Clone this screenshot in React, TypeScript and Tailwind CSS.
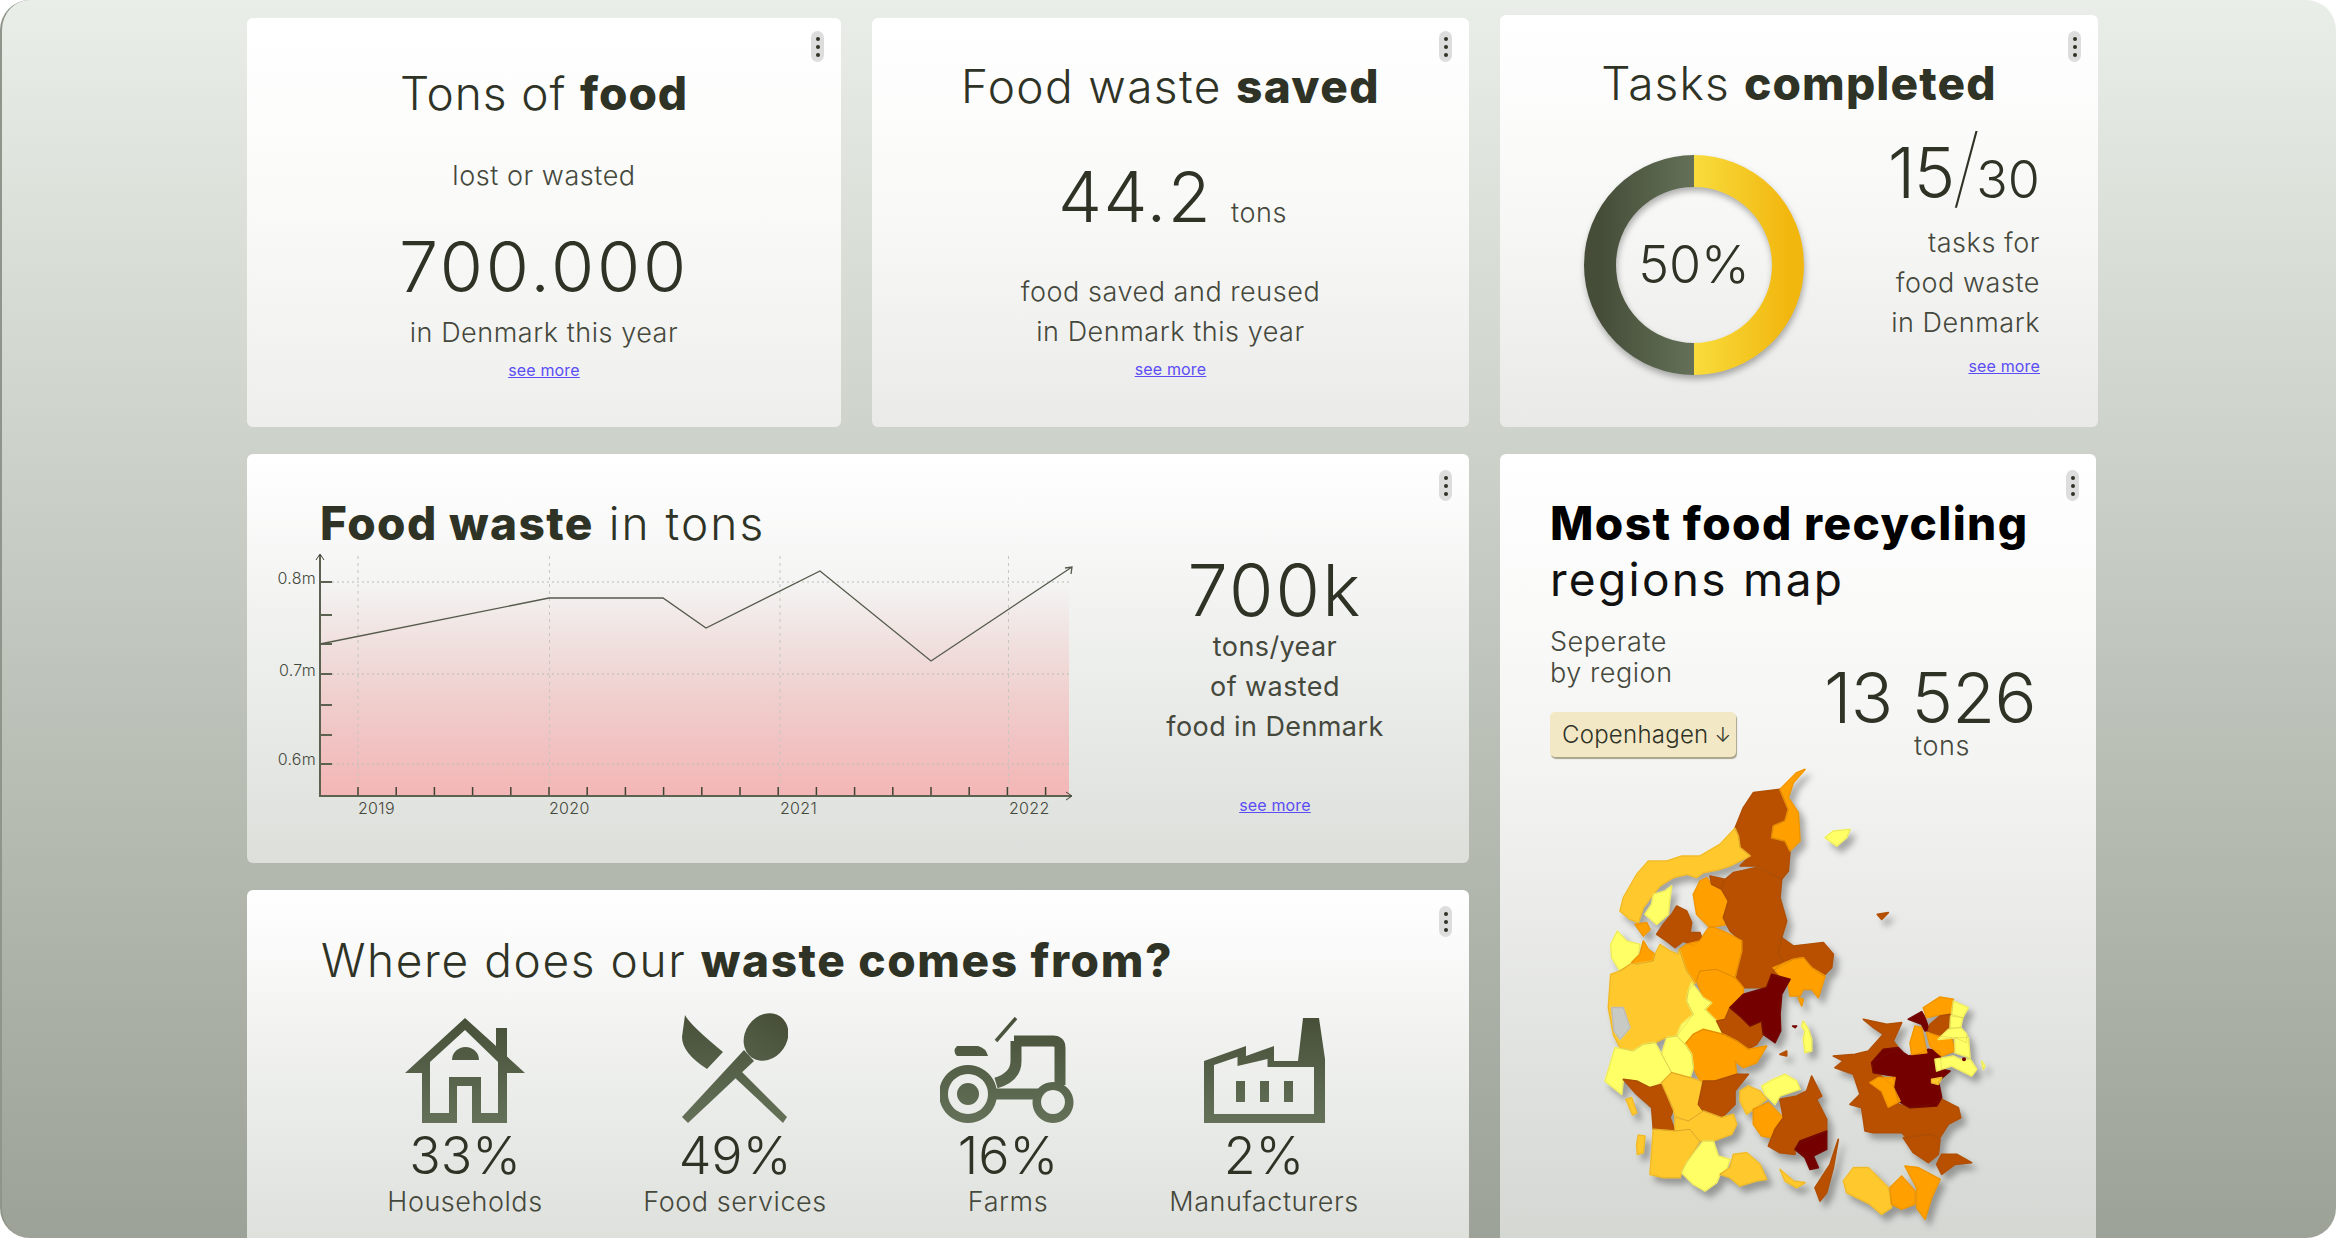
const font = "font-['Inter','Liberation_Sans',sans-serif]"

const regions: { fill: string; pts: string }[] = [
  // Jutland north
  { fill: '#b85000', pts: '640,155 720,145 745,205 735,240 700,255 695,290 735,300 750,330 745,390 725,415 690,395 650,375 600,375 630,345 600,320 595,285 585,262 610,200' },
  { fill: '#ffa000', pts: '795,85 770,95 720,145 745,205 735,240 700,255 695,290 735,300 750,330 780,300 775,215 745,170 760,125' },
  { fill: '#ffc92e', pts: '585,262 595,285 600,320 630,345 600,360 570,375 540,385 490,395 470,410 440,400 400,410 360,435 340,460 310,500 295,545 270,535 240,510 250,470 290,400 325,360 380,360 425,345 480,345 540,310' },
  { fill: '#ffff66', pts: '395,435 390,470 385,520 350,550 315,520 335,490 340,460 375,450' },
  { fill: '#ffff66', pts: '232,570 260,600 300,610 295,640 270,670 240,690 215,650 212,610' },
  { fill: '#ffa000', pts: '285,550 320,545 330,565 310,585' },
  { fill: '#ffa000', pts: '310,600 325,625 345,640 340,660 290,670 275,665 300,640' },
  { fill: '#b85000', pts: '410,495 440,510 455,545 450,575 480,575 485,590 460,615 430,600 405,620 380,600 350,580 370,550 395,520' },
  { fill: '#ffa000', pts: '500,410 515,430 545,445 565,480 550,530 560,550 510,560 470,520 460,460 480,420' },
  { fill: '#b85000', pts: '580,395 650,380 725,415 720,470 740,540 725,590 715,635 730,660 700,690 720,705 690,710 680,740 610,740 585,710 605,630 605,600 570,570 560,550 550,530 565,480 545,445 550,420' },
  { fill: '#b85000', pts: '510,405 555,415 545,445 515,430' },
  { fill: '#b85000', pts: '725,590 760,615 850,605 880,640 875,680 850,705 815,680 790,650 760,655 700,690 730,660 715,635' },
  { fill: '#ffa000', pts: '700,680 760,655 790,650 815,680 855,705 835,770 815,745 790,745 780,765 750,765 745,730 720,705' },
  { fill: '#ffa000', pts: '775,770 790,775 785,795' },
  // Jutland middle
  { fill: '#ffa000', pts: '510,555 560,575 605,600 605,630 585,710 530,685 480,690 465,725 440,690 418,625 440,610 480,600 495,575' },
  { fill: '#ffa000', pts: '480,690 530,685 585,710 610,740 610,760 570,800 555,835 530,840 495,805 515,785 490,770 470,720' },
  { fill: '#ffc92e', pts: '360,610 390,630 415,640 418,625 440,690 465,725 445,750 440,780 460,820 410,885 375,890 345,905 310,910 280,930 240,920 220,880 205,800 212,700 240,690 270,670 340,660 345,640' },
  { fill: '#c8cac6', pts: '215,800 250,800 270,860 240,895 222,870' },
  { fill: '#ffff66', pts: '455,725 490,770 515,785 495,805 530,840 550,880 490,865 460,880 435,910 410,885 425,850 460,820 440,780 445,750' },
  { fill: '#b85000', pts: '570,800 600,825 630,855 665,840 670,880 650,910 625,925 590,900 550,880 530,840 555,835' },
  { fill: '#740000', pts: '695,700 750,715 725,760 720,820 722,870 705,905 670,880 665,840 630,855 600,825 570,800 610,760 680,740' },
  { fill: '#ffa000', pts: '490,865 550,880 590,900 625,925 680,915 650,965 610,980 585,960 590,1000 525,1020 480,1020 460,980 455,940 435,910 460,880' },
  { fill: '#ffff66', pts: '380,890 410,885 435,910 455,940 460,980 450,1010 395,995 365,940' },
  { fill: '#ffff66', pts: '225,920 280,930 310,910 345,905 365,940 395,995 365,1025 330,1040 290,1020 250,1015 245,1060 195,1020' },
  // Jutland south
  { fill: '#b85000', pts: '250,1015 290,1020 330,1040 365,1030 385,1070 400,1105 390,1130 405,1170 340,1165 335,1100 290,1060' },
  { fill: '#ffc92e', pts: '258,1075 275,1070 290,1115 278,1122' },
  { fill: '#ffc92e', pts: '365,1025 395,995 450,1010 480,1020 490,1035 475,1090 490,1110 445,1140 405,1125 400,1105 385,1070' },
  { fill: '#b85000', pts: '490,1020 525,1020 590,1000 625,1000 585,1050 585,1090 545,1130 490,1110 475,1090' },
  { fill: '#ffc92e', pts: '405,1130 445,1140 490,1110 545,1130 580,1120 590,1150 575,1180 520,1200 475,1200 450,1165 405,1170' },
  { fill: '#ffc92e', pts: '340,1165 405,1170 450,1165 480,1200 430,1280 420,1310 370,1310 330,1300' },
  { fill: '#ffc92e', pts: '295,1182 315,1185 310,1235 292,1240 290,1210' },
  { fill: '#ffff66', pts: '490,1200 520,1200 535,1245 570,1255 560,1285 540,1300 530,1325 495,1350 460,1330 425,1295 440,1265' },
  { fill: '#ffc92e', pts: '580,1240 620,1235 660,1270 680,1315 650,1320 600,1335 570,1310 540,1300 570,1280' },
  // Funen
  { fill: '#ffff66', pts: '665,1035 700,1015 735,1000 770,1020 780,1045 720,1065 705,1090 675,1060' },
  { fill: '#ffc92e', pts: '600,1050 625,1035 660,1050 680,1075 640,1105 620,1120 600,1080' },
  { fill: '#ffa000', pts: '640,1105 685,1085 730,1130 705,1165 695,1190 665,1185 640,1150' },
  { fill: '#b85000', pts: '720,1075 770,1065 800,1050 815,1005 845,1065 830,1075 860,1135 860,1170 800,1200 765,1215 765,1240 720,1235 685,1215 705,1165 730,1130' },
  { fill: '#740000', pts: '860,1170 860,1225 820,1245 835,1280 810,1285 795,1250 765,1225 780,1200' },
  { fill: '#b85000', pts: '895,1195 880,1280 860,1355 840,1380 825,1340 870,1270' },
  { fill: '#ffc92e', pts: '720,1285 760,1320 795,1325 770,1340 735,1320' },
  // islands
  { fill: '#ffff66', pts: '790,840 805,865 815,895 815,930 795,935 790,895 795,870 785,855' },
  { fill: '#ffff66', pts: '855,290 880,270 930,265 920,290 890,315' },
  { fill: '#b85000', pts: '1012,520 1045,515 1025,535' },
  { fill: '#b85000', pts: '720,940 740,930 740,945' },
  { fill: '#740000', pts: '758,855 770,855 765,860' },
  // Zealand
  { fill: '#b85000', pts: '970,835 1040,850 1085,845 1060,900 1075,920 1005,960 995,985 1030,1010 1065,1040 1075,1090 1110,1100 1175,1090 1205,1075 1255,1100 1262,1130 1225,1150 1200,1190 1170,1180 1100,1190 1085,1175 1000,1175 975,1170 965,1100 930,1090 960,1060 940,1000 885,980 910,960 880,945 945,940 985,930 1030,880 1000,860' },
  { fill: '#740000', pts: '1030,925 1075,920 1090,935 1105,945 1130,940 1165,925 1200,930 1205,985 1230,990 1195,1020 1205,1070 1190,1095 1110,1100 1075,1080 1065,1040 1060,1005 1000,995 995,965' },
  { fill: '#ffa000', pts: '1015,1010 1065,1010 1060,1040 1080,1080 1045,1098 1025,1050 990,1025' },
  { fill: '#ffa000', pts: '1125,855 1145,860 1160,935 1115,940 1110,905' },
  { fill: '#740000', pts: '1105,835 1145,812 1155,830 1168,868 1155,870 1145,850' },
  { fill: '#ffa000', pts: '1150,800 1200,768 1240,775 1235,820 1195,822 1160,830' },
  { fill: '#b85000', pts: '1200,825 1230,820 1230,860 1195,885 1165,870 1170,850' },
  { fill: '#ffff66', pts: '1240,780 1285,800 1268,830 1235,820' },
  { fill: '#ffff66', pts: '1232,825 1268,830 1262,860 1230,860' },
  { fill: '#ffa000', pts: '1160,875 1195,885 1235,890 1245,930 1205,945 1170,915' },
  { fill: '#ffff66', pts: '1225,865 1262,860 1280,880 1280,905 1245,890 1195,895' },
  { fill: '#ffff66', pts: '1245,890 1285,890 1290,950 1245,935' },
  { fill: '#ffff66', pts: '1185,955 1240,945 1260,955 1290,955 1310,985 1295,1005 1265,990 1235,975 1190,990' },
  { fill: '#ffc92e', pts: '1175,1015 1205,1010 1195,1030 1175,1025' },
  { fill: '#ffff66', pts: '1325,960 1335,975 1330,985' },
  { fill: '#b85000', pts: '1090,1190 1170,1180 1200,1195 1195,1240 1165,1265 1120,1235' },
  { fill: '#b85000', pts: '1205,1240 1250,1240 1295,1265 1245,1270 1205,1300 1190,1270' },
  { fill: '#ffc92e', pts: '940,1280 985,1280 1045,1340 1055,1400 1025,1420 990,1390 920,1355 910,1320' },
  { fill: '#ffa000', pts: '1085,1305 1125,1350 1125,1390 1085,1405 1055,1390 1050,1340' },
  { fill: '#ffa000', pts: '1095,1275 1135,1280 1200,1315 1175,1370 1155,1435 1130,1400 1130,1340' },
]

function Kebab({ className = 'top-[16px]' }: { className?: string }) {
  return (
    <div className={`absolute right-[17px] flex h-[31px] w-[13px] flex-col items-center justify-center gap-[4px] rounded-full bg-[#dddddd] ${className}`}>
      <span className="h-[4px] w-[4px] rounded-full bg-[#2f3326]" />
      <span className="h-[4px] w-[4px] rounded-full bg-[#2f3326]" />
      <span className="h-[4px] w-[4px] rounded-full bg-[#2f3326]" />
    </div>
  )
}

function SeeMore({ className = '' }: { className?: string }) {
  return <a className={`block text-[16px] leading-[20px] tracking-[0.01em] text-[#5b4df5] underline ${className}`}>see more</a>
}

function Sub({ children, className = '' }: { children: React.ReactNode; className?: string }) {
  return <p className={`text-[27px] leading-[40px] font-light tracking-[0.02em] text-[#45483c] ${className}`}>{children}</p>
}

function IconGradient({ id, h }: { id: string; h: number }) {
  return (
    <linearGradient id={id} gradientUnits="userSpaceOnUse" x1="0" y1="0" x2="0" y2={h}>
      <stop offset="0" stopColor="#474f38" />
      <stop offset="1" stopColor="#647158" />
    </linearGradient>
  )
}

function HouseIcon() {
  return (
    <svg width="120" height="105" viewBox="0 0 120 105">
      <defs><IconGradient id="house" h={105} /></defs>
      <path
        fill="url(#house)"
        fillRule="evenodd"
        d="M60 0 L91 28 V10 H102 V38.5 L120 55 H102 V105 H67 V68 H52 V105 H17 V55 H0 Z M60 12 L25 44 V95 H44 V59 H76 V95 H93 V44 Z"
      />
      <path fill="url(#house)" d="M47 42 A13.5 13 0 0 1 74 42 Z" />
    </svg>
  )
}

function CutleryIcon() {
  return (
    <svg width="106" height="110" viewBox="0 0 106 110">
      <defs><IconGradient id="cutlery" h={110} /></defs>
      <g fill="url(#cutlery)">
        <path d="M3 2 Q8 12 41 39 L25 56 Q0 40 0 24 Z" />
        <ellipse cx="84" cy="24" rx="21" ry="25" transform="rotate(35 84 24)" />
        <path d="M62 37 L72 48 L6 110 L0 104 Z" />
        <path d="M50 62 L56 55 L105 104 L101 110 Z" />
      </g>
    </svg>
  )
}

function TractorIcon() {
  return (
    <svg width="134" height="106" viewBox="0 0 134 106" className="-ml-[3px]">
      <defs><IconGradient id="tractor" h={106} /></defs>
      <path
        fill="url(#tractor)"
        fillRule="evenodd"
        d="M28 48 a29 29 0 1 0 0.01 0 Z M28 57 a20 20 0 1 1 -0.01 0 Z M113 65 a20.5 20.5 0 1 0 0.01 0 Z M113 73 a12 12 0 1 1 -0.01 0 Z"
      />
      <circle cx="28" cy="77" r="11" fill="url(#tractor)" />
      <path d="M76 1 L56 24" stroke="url(#tractor)" strokeWidth="3.5" fill="none" />
      <path d="M74 24 H113 Q120 24 120 31 V68 M76 24 V44 Q76 60 56 66 M56 77 H98" stroke="url(#tractor)" strokeWidth="11" fill="none" />
      <path d="M17 29 H38 Q46 31 48 39 H17 Q12 34 17 29 Z" fill="url(#tractor)" />
    </svg>
  )
}

function FactoryIcon() {
  return (
    <svg width="122" height="105" viewBox="0 0 122 105">
      <defs><IconGradient id="factory" h={105} /></defs>
      <path
        fill="url(#factory)"
        fillRule="evenodd"
        d="M1 43 L43 28 V38 L71 28 V43 H95 L100 0 H116 L122 41 V105 H1 Z M11 47 L34.5 39 V48 L64.5 41 V49 H111 V96 H11 Z"
      />
      <g fill="url(#factory)">
        <rect x="33" y="63" width="9" height="21" />
        <rect x="57" y="63" width="9" height="21" />
        <rect x="81" y="63" width="9" height="21" />
      </g>
    </svg>
  )
}

function Source({ icon, value, label, w }: { icon: React.ReactNode; value: string; label: string; w: string }) {
  return (
    <div className={`flex flex-col items-center ${w}`}>
      <div className="flex h-[111px] items-end">{icon}</div>
      <p className="mt-[3px] text-[52px] leading-[60px] font-light text-[#2f3326]">{value}</p>
      <Sub className="-mt-[4px]">{label}</Sub>
    </div>
  )
}

function Donut() {
  return (
    <div className="relative h-[220px] w-[220px] shrink-0">
      <svg width="220" height="220" viewBox="0 0 220 220" className="[filter:drop-shadow(1px_4px_3px_rgba(0,0,0,0.3))]">
        <defs>
          <linearGradient id="donutGreen" x1="0" y1="0" x2="1" y2="0">
            <stop offset="0" stopColor="#454d38" />
            <stop offset="1" stopColor="#647158" />
          </linearGradient>
          <linearGradient id="donutYellow" x1="0" y1="0" x2="1" y2="0">
            <stop offset="0" stopColor="#f8dc3c" />
            <stop offset="1" stopColor="#f2b70f" />
          </linearGradient>
        </defs>
        <path d="M110 16 A94 94 0 0 0 110 204" fill="none" stroke="url(#donutGreen)" strokeWidth="32" />
        <path d="M110 16 A94 94 0 0 1 110 204" fill="none" stroke="url(#donutYellow)" strokeWidth="32" />
      </svg>
      <span className="absolute inset-0 flex items-center justify-center text-[52px] font-light text-[#2f3326]">50%</span>
    </div>
  )
}

function WasteChart() {
  const xs = Array.from({ length: 19 }, (_, i) => 358 + i * 38.2)
  const ys = [583, 616, 645, 675, 706, 736, 765]
  return (
    <svg width="815" height="280" viewBox="270 550 815 280" className="ml-[23px] block" fontFamily="Inter, sans-serif">
      <defs>
        <linearGradient id="chartFill" x1="0" y1="0" x2="0" y2="1">
          <stop offset="0" stopColor="#f4b8b8" stopOpacity="0" />
          <stop offset="1" stopColor="#f4b6b6" />
        </linearGradient>
      </defs>
      <rect x="320" y="583" width="749" height="214" fill="url(#chartFill)" />
      {[583, 675, 765].map((y) => (
        <line key={y} x1="332" x2="1069" y1={y} y2={y} stroke="#b9bcb3" strokeDasharray="2 3" />
      ))}
      {[358, 549.5, 780, 1008.5].map((x) => (
        <line key={x} x1={x} x2={x} y1="557" y2="797" stroke="#c4c6bf" strokeDasharray="3 4" />
      ))}
      {ys.map((y) => (
        <line key={y} x1="320" x2="332" y1={y} y2={y} stroke="#5c6150" strokeWidth="2" />
      ))}
      {xs.map((x) => (
        <line key={x} x1={x} x2={x} y1="788" y2="797" stroke="#3f4335" strokeWidth="1.5" />
      ))}
      <path d="M320 556 V797 H1071" fill="none" stroke="#5c6150" strokeWidth="2" />
      <path d="M316 561 L320 555 L324 561 M1066 793 L1072 797 L1066 801" fill="none" stroke="#3f4335" strokeWidth="1" />
      <path d="M320 645 L549 599 H663 L706 629 L820 572 L931 662 L1072 568 M1065 569 L1072 568 L1071 575" fill="none" stroke="#555a4b" strokeWidth="1.3" />
      <g fill="#45483c" fontSize="16" fontWeight="300" letterSpacing="0.3">
        <text x="316" y="585" textAnchor="end">0.8m</text>
        <text x="316" y="677" textAnchor="end">0.7m</text>
        <text x="316" y="766" textAnchor="end">0.6m</text>
        <text x="358" y="815">2019</text>
        <text x="549" y="815">2020</text>
        <text x="780" y="815">2021</text>
        <text x="1009" y="815">2022</text>
      </g>
    </svg>
  )
}

function DenmarkMap() {
  return (
    <svg
      width="500"
      height="470"
      viewBox="0 60 1500 1410"
      className="-mt-[5px] -ml-[10px] block [filter:drop-shadow(5px_6px_3px_rgba(0,0,0,0.3))]"
    >
      {/* same colour stroke first so neighbouring regions close up */}
      {regions.map((r, i) => (
        <polygon key={i} points={r.pts} fill={r.fill} stroke={r.fill} strokeWidth="5" strokeLinejoin="round" />
      ))}
      {regions.map((r, i) => (
        <polygon key={i} points={r.pts} fill="none" stroke="#7a4a18" strokeOpacity="0.3" strokeWidth="1.5" />
      ))}
      <circle cx="1272" cy="955" r="6" fill="#740000" />
    </svg>
  )
}

export default function App() {
  return (
    <div className={`h-[1238px] w-[2336px] overflow-hidden bg-white ${font}`}>
      <div className="h-full overflow-hidden rounded-[30px] border-l-2 border-[#8f958a] bg-gradient-to-b from-[#e9eee8] to-[#9ca297] pt-[18px] pl-[245px]">
        <div className="grid w-[1853px] grid-cols-[594px_597px_598px] grid-rows-[409px_409px_auto] gap-x-[31px] gap-y-[27px]">
          {/* Tons of food */}
          <section className="relative flex flex-col items-center rounded-[6px] bg-gradient-to-b from-white via-[#f9faf8] to-[#eeefec] pt-[47px] text-center">
            <Kebab className="top-[13px]" />
            <h2 className="text-[46px] leading-[56px] font-light tracking-[0.02em] text-[#2f3326]">
              Tons of <b className="font-extrabold">food</b>
            </h2>
            <Sub className="mt-[35px]">lost or wasted</Sub>
            <p className="mt-[29px] text-[70px] leading-[84px] font-light tracking-[0.04em] text-[#2f3326]">700.000</p>
            <Sub className="mt-[4px]">in Denmark this year</Sub>
            <SeeMore className="mt-[7px]" />
          </section>

          {/* Food waste saved */}
          <section className="relative flex flex-col items-center rounded-[6px] bg-gradient-to-b from-white via-[#f8f9f7] to-[#eaebe8] pt-[40px] text-center">
            <Kebab className="top-[13px]" />
            <h2 className="text-[46px] leading-[56px] font-light tracking-[0.03em] text-[#2f3326]">
              Food waste <b className="font-extrabold">saved</b>
            </h2>
            <div className="mt-[41px] flex items-baseline gap-[19px] pl-[4px]">
              <span className="text-[70px] leading-[84px] font-light tracking-[0.02em] text-[#2f3326]">44.2</span>
              <span className="text-[27px] font-light tracking-[0.02em] text-[#45483c]">tons</span>
            </div>
            <Sub className="mt-[33px]">
              food saved and reused
              <br />
              in Denmark this year
            </Sub>
            <SeeMore className="mt-[7px]" />
          </section>

          {/* Tasks completed */}
          <section className="relative -mt-[3px] rounded-[6px] bg-gradient-to-b from-white via-[#f7f8f6] to-[#e9eae7] pt-[40px]">
            <Kebab />
            <h2 className="text-center text-[46px] leading-[56px] font-light tracking-[0.025em] text-[#2f3326]">
              Tasks <b className="font-extrabold">completed</b>
            </h2>
            <div className="mt-[44px] flex justify-between pr-[58px] pl-[84px]">
              <Donut />
              <div className="-mt-[31px] flex flex-col items-end text-right">
                <p className="flex h-[86px] items-baseline text-[#2f3326]">
                  <span className="text-[70px] leading-[84px] font-light tracking-[-0.02em]">15</span>
                  <span className="-mr-[4px] -ml-[2px] text-[88px] leading-[84px] font-thin">/</span>
                  <span className="text-[52px] leading-[84px] font-light">30</span>
                </p>
                <Sub className="mt-[13px]">
                  tasks for
                  <br />
                  food waste
                  <br />
                  in Denmark
                </Sub>
                <SeeMore className="mt-[13px]" />
              </div>
            </div>
          </section>

          {/* Food waste in tons */}
          <section className="relative col-span-2 flex rounded-[6px] bg-gradient-to-b from-white to-[#dcdfda]">
            <Kebab />
            <div className="w-[838px] pt-[41px]">
              <h2 className="pl-[73px] text-[46px] leading-[56px] font-light tracking-[0.045em] text-[#2f3326]">
                <b className="font-extrabold tracking-[0.03em]">Food waste</b> in tons
              </h2>
              <div className="-mt-[2px]">
                <WasteChart />
              </div>
            </div>
            <div className="flex flex-1 flex-col items-center pt-[94px] pr-[4px] text-center">
              <p className="text-[72px] leading-[84px] font-light tracking-[0.03em] text-[#2f3326]">700k</p>
              <p className="-mt-[5px] text-[27px] leading-[40px] tracking-[0.015em] text-[#45483c]">
                tons/year
                <br />
                of wasted
                <br />
                food in Denmark
              </p>
              <SeeMore className="mt-[48px]" />
            </div>
          </section>

          {/* Regions map */}
          <section className="relative row-span-2 h-[800px] w-[596px] rounded-[6px] bg-[linear-gradient(to_bottom,#ffffff_0%,#f4f5f3_38%,#d4d6d2_100%)] pt-[41px] pl-[50px]">
            <Kebab />
            <h2 className="text-[46px] leading-[56px] tracking-[0.03em] text-[#111111]">
              <b className="font-extrabold text-black">Most food recycling</b>
              <br />
              <span className="tracking-[0.05em]">regions map</span>
            </h2>
            <div className="mt-[19px] flex justify-between pr-[60px]">
              <div>
                <p className="text-[27px] leading-[31px] font-light tracking-[0.02em] text-[#45483c]">
                  Seperate
                  <br />
                  by region
                </p>
                <button className="mt-[24px] flex h-[45px] w-[186px] items-center gap-[6px] rounded-[5px] bg-[#f3e8c6] pl-[12px] text-[24px] font-light tracking-[0.01em] text-[#2f3326] shadow-[1px_2px_1px_rgba(120,110,70,0.6)]">
                  Copenhagen<span className="text-[20px]">↓</span>
                </button>
              </div>
              <div className="mt-[42px] flex flex-col items-center">
                <p className="text-[70px] leading-[60px] font-light tracking-[-0.01em] text-[#2f3326]">13 526</p>
                <Sub className="-mt-[2px] pl-[24px]">tons</Sub>
              </div>
            </div>
            <DenmarkMap />
            <SeeMore className="mt-[2px] -ml-[50px] text-center" />
          </section>

          {/* Waste sources */}
          <section className="relative col-span-2 h-[400px] rounded-[6px] bg-gradient-to-b from-white to-[#d9dcd7] pt-[42px]">
            <Kebab />
            <h2 className="pl-[74px] text-[46px] leading-[56px] font-light tracking-[0.035em] text-[#2f3326]">
              Where does our <b className="font-extrabold">waste comes from?</b>
            </h2>
            <div className="mt-[24px] flex pl-[83px]">
              <Source w="w-[270px]" icon={<HouseIcon />} value="33%" label="Households" />
              <Source w="w-[270px]" icon={<CutleryIcon />} value="49%" label="Food services" />
              <Source w="w-[276px]" icon={<TractorIcon />} value="16%" label="Farms" />
              <Source w="w-[236px]" icon={<FactoryIcon />} value="2%" label="Manufacturers" />
            </div>
          </section>
        </div>
      </div>
    </div>
  )
}
